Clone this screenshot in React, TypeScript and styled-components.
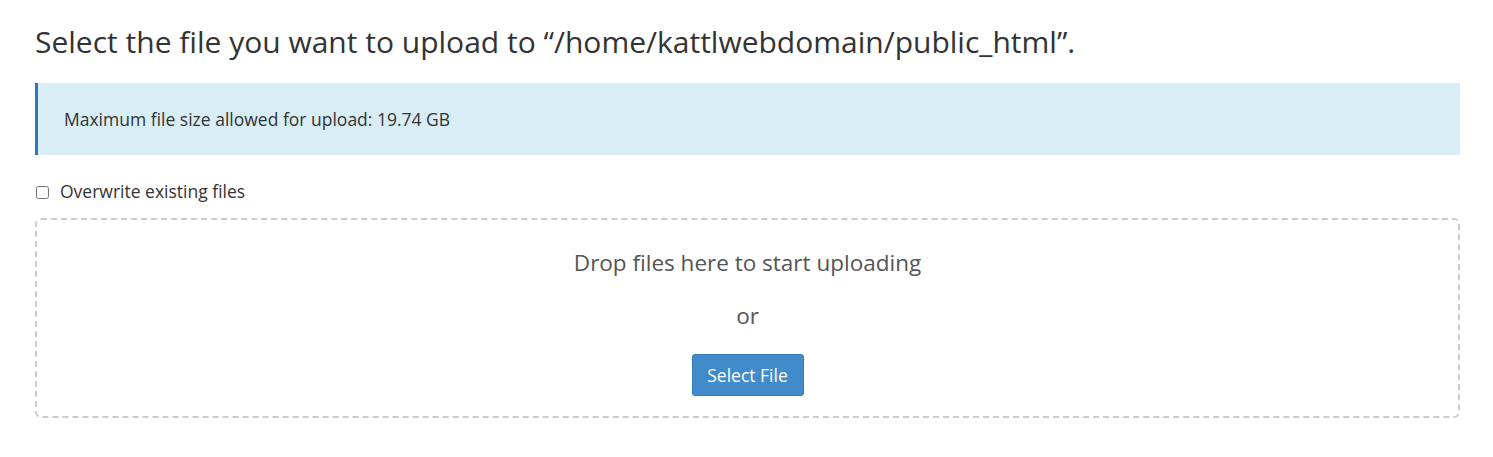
import React from 'react'
import styled, { createGlobalStyle } from 'styled-components'

const GlobalStyle = createGlobalStyle`
  body {
    margin: 0;
    background: #fff;
    font-family: "Open Sans", "Liberation Sans", sans-serif;
    color: #333;
  }
`

const Page = styled.div`
  padding: 18px 33px 0 35px;
`

const Title = styled.h1`
  margin: 0 0 17px;
  font-size: 30px;
  font-weight: 400;
  line-height: 48px;
  color: #333;
`

const Alert = styled.div`
  display: flex;
  align-items: center;
  height: 72px;
  padding: 0 26px;
  background: #d9edf7;
  border-left: 3px solid #2a7ab8;
  font-size: 17.5px;
  color: #333;
`

const CheckRow = styled.label`
  display: flex;
  align-items: center;
  gap: 11px;
  height: 24px;
  margin: 24px 0 15px 1px;
  font-size: 17.5px;
  color: #333;
`

const Checkbox = styled.input`
  margin: 2px 0 0;
  width: 13px;
  height: 13px;
`

const DropZone = styled.div`
  display: flex;
  flex-direction: column;
  align-items: center;
  height: 200px;
  box-sizing: border-box;
  padding-top: 27px;
  border: 2px dashed #ccc;
  border-radius: 6px;
  color: #555;
`

const DropText = styled.div`
  font-size: 22.5px;
  line-height: 32px;
`

const OrText = styled.div`
  margin-top: 21px;
  font-size: 22.5px;
  line-height: 32px;
`

const SelectButton = styled.button`
  margin-top: 22px;
  height: 42px;
  width: 112px;
  padding: 0;
  background: #428bca;
  border: 1px solid #357ebd;
  border-radius: 3px;
  color: #fff;
  font-family: inherit;
  font-size: 17.5px;
  cursor: pointer;
`

export default function App() {
  return (
    <>
      <GlobalStyle />
      <Page>
        <Title>Select the file you want to upload to “/home/kattlwebdomain/public_html”.</Title>
        <Alert>Maximum file size allowed for upload: 19.74 GB</Alert>
        <CheckRow>
          <Checkbox type="checkbox" />
          Overwrite existing files
        </CheckRow>
        <DropZone>
          <DropText>Drop files here to start uploading</DropText>
          <OrText>or</OrText>
          <SelectButton>Select File</SelectButton>
        </DropZone>
      </Page>
    </>
  )
}
